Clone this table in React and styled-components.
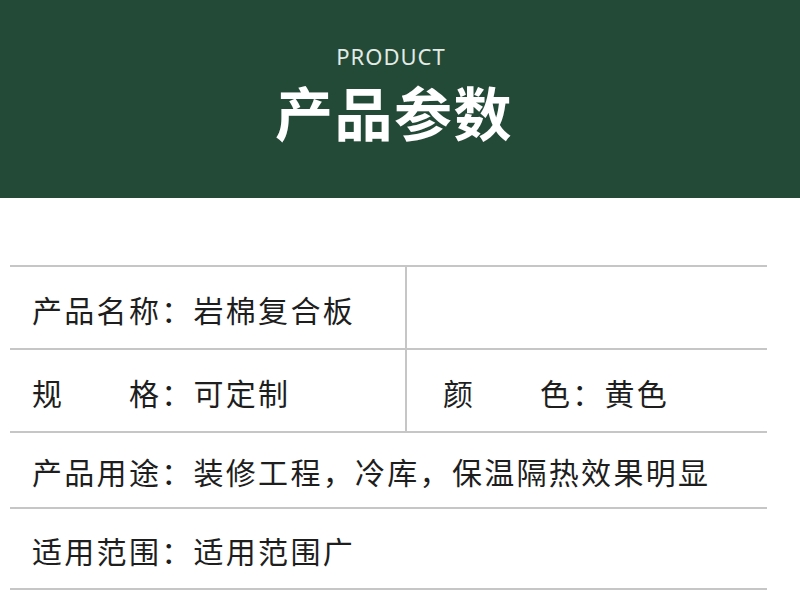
import React from 'react';
import styled, { createGlobalStyle } from 'styled-components';

const GlobalStyle = createGlobalStyle`
  html, body {
    margin: 0;
    padding: 0;
    background: #ffffff;
  }
  body {
    font-family: "Noto Sans CJK SC", "Noto Sans", sans-serif;
  }
`;

const rows = [
  { cells: [{ text: '产品名称：岩棉复合板' }, { text: '', pad: 36 }], height: 83 },
  { cells: [{ text: '规　　格：可定制' }, { text: '颜　　色：黄色', pad: 36 }], height: 83 },
  { cells: [{ text: '产品用途：装修工程，冷库，保温隔热效果明显' }], height: 76 },
  { cells: [{ text: '适用范围：适用范围广' }], height: 81 },
];

export default function App() {
  return (
    <>
      <GlobalStyle />
      <Page>
        <Banner>
          <Subtitle>PRODUCT</Subtitle>
          <Title>产品参数</Title>
        </Banner>

        <Table>
          {rows.map((row, i) => (
            <Row key={i} split={row.cells.length > 1} height={row.height}>
              {row.cells.map((cell, j) => (
                <Cell key={j} divider={j > 0} pad={cell.pad}>
                  {cell.text}
                </Cell>
              ))}
            </Row>
          ))}
        </Table>
      </Page>
    </>
  );
}

const Page = styled.div`
  width: 800px;
  height: 594px;
  overflow: hidden;
  background: #ffffff;
`;

const Banner = styled.div`
  height: 198px;
  background: #234a37;
  display: flex;
  flex-direction: column;
  align-items: center;
  padding: 44px 12px 0 0;
  box-sizing: border-box;
`;

const Subtitle = styled.div`
  font-family: "Noto Sans", "Open Sans", sans-serif;
  font-size: 22px;
  line-height: 24px;
  letter-spacing: 1px;
  color: #e3ebe6;
  margin-right: 6px;
`;

const Title = styled.div`
  font-family: "Noto Sans CJK SC", sans-serif;
  font-size: 58px;
  font-weight: 700;
  line-height: 62px;
  letter-spacing: 1.5px;
  color: #ffffff;
  margin-top: 12px;
`;

const Table = styled.div`
  margin: 67px 0 0 10px;
  width: 757px;
  border-bottom: 2px solid #c6c6c6;
`;

const Row = styled.div`
  display: grid;
  grid-template-columns: ${(p) => (p.split ? '395px 1fr' : '1fr')};
  height: ${(p) => p.height}px;
  border-top: 2px solid #c6c6c6;
  box-sizing: border-box;
`;

const Cell = styled.div`
  display: flex;
  align-items: center;
  padding-left: ${(p) => p.pad || 22}px;
  padding-top: 2px;
  border-left: ${(p) => (p.divider ? '2px solid #c6c6c6' : 'none')};
  font-size: 30px;
  letter-spacing: 2.3px;
  color: #1e1e1e;
  white-space: nowrap;
`;
